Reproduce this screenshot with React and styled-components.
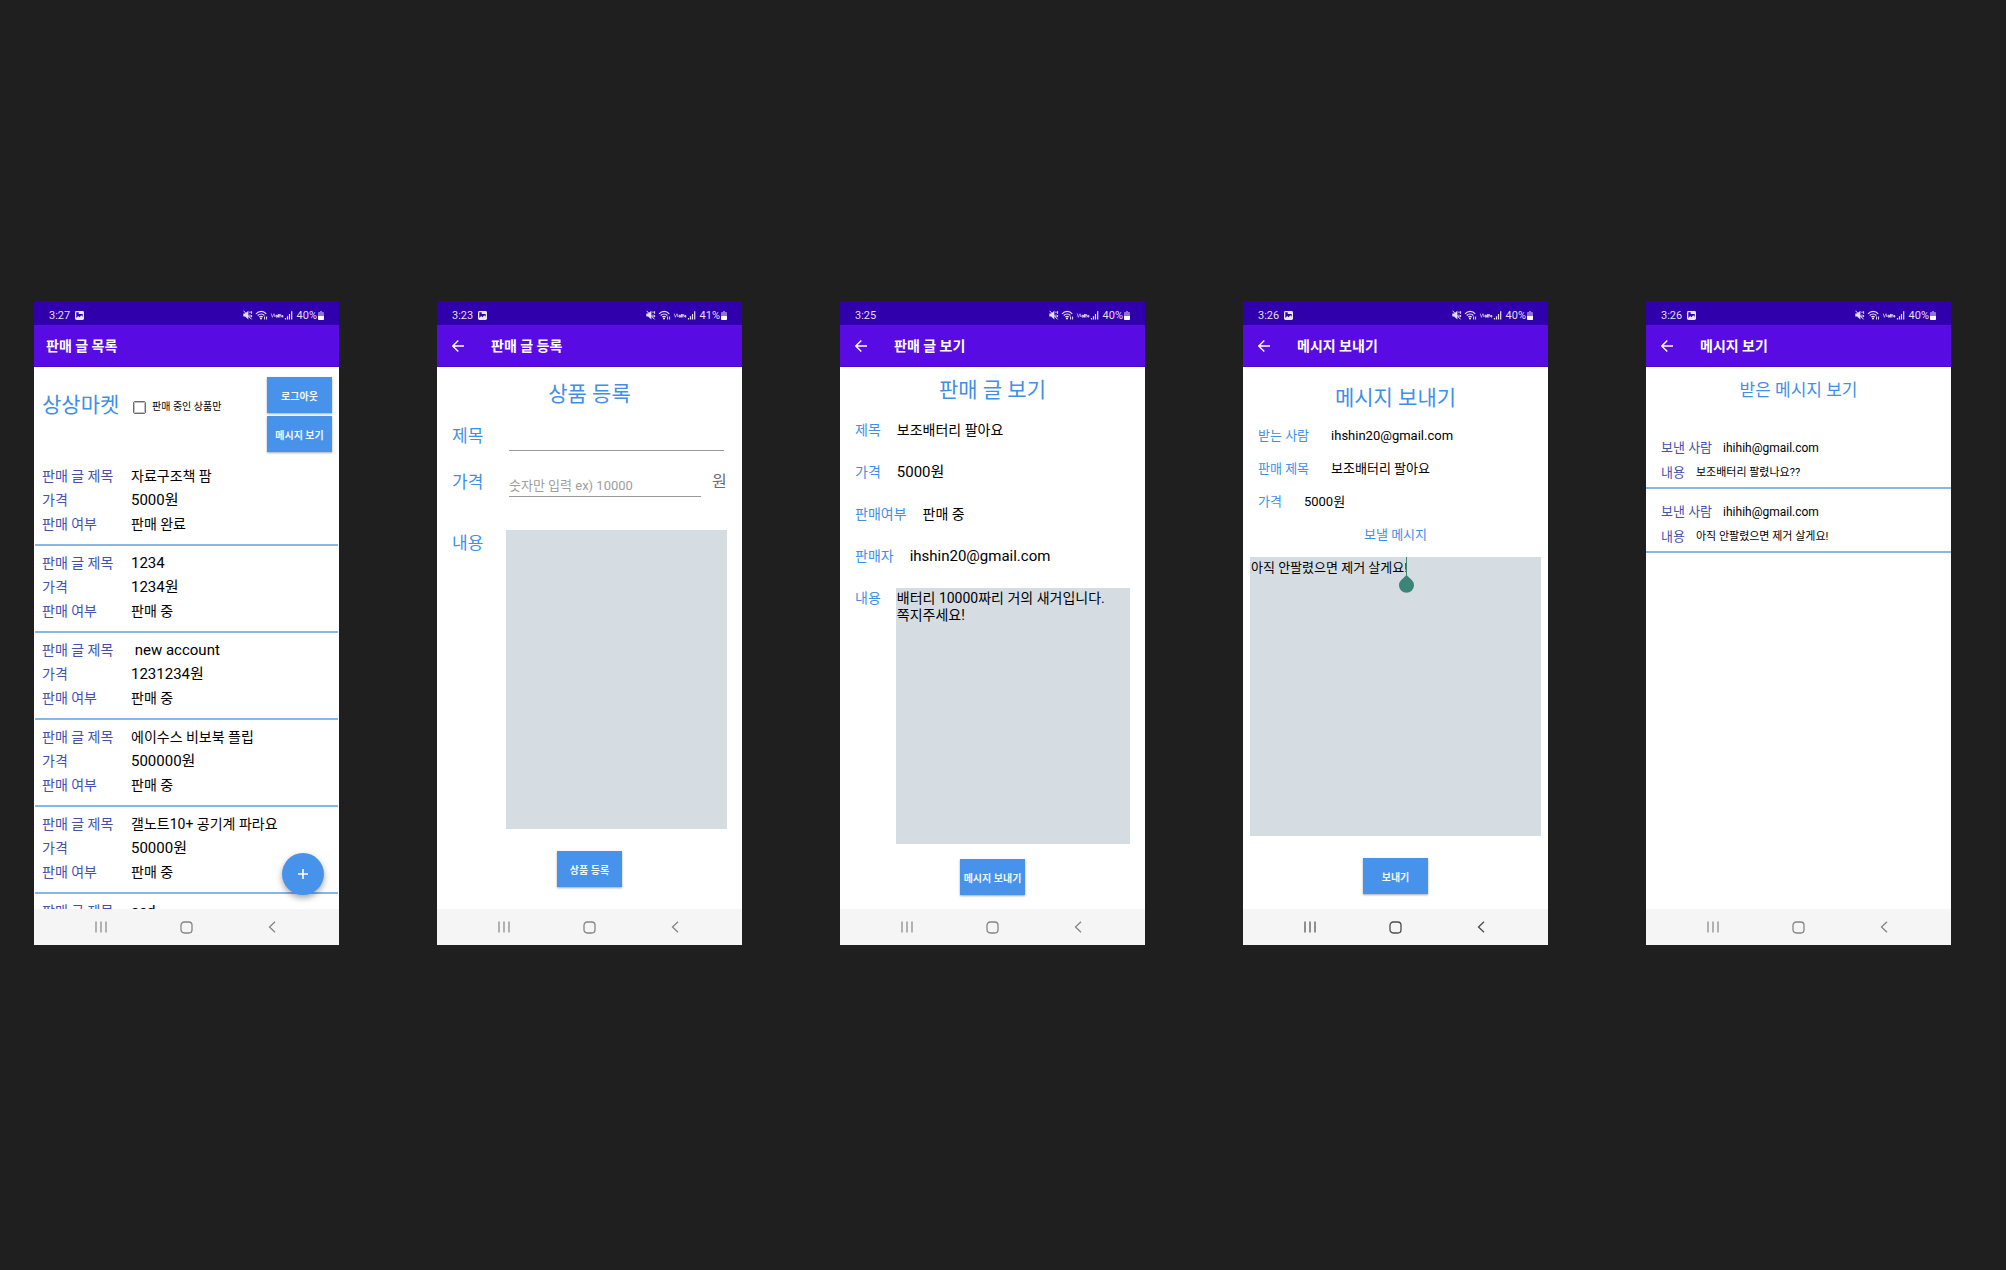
import React from "react";
import styled, { createGlobalStyle } from "styled-components";

const blue = "#4793ec";
const titleBlue = "#3f8fe9";
const indigo = "#4351b0";
const fill = "#d5dde3";

const GlobalStyle = createGlobalStyle`
  *, *::before, *::after { box-sizing: border-box; }
  body {
    margin: 0;
    background: #1f1f1f;
    font-family: Roboto, "Noto Sans CJK KR", sans-serif;
    color: #000;
  }
  h1, h2, ul, dl, dd, dt, p { margin: 0; padding: 0; font-weight: 400; }
  button, input, textarea { font-family: inherit; }
`;

const Board = styled.main`
  min-height: 100vh;
  display: grid;
  grid-template-columns: repeat(5, minmax(0, 1fr));
  gap: 98px;
  align-items: start;
  padding: 301px 55px 0 34px;
`;

const Phone = styled.section`
  display: flex;
  flex-direction: column;
  height: 644px;
  background: #fff;
`;

const StatusBar = styled.div`
  flex: none;
  height: 24px;
  padding: 5px 15px 0;
  display: flex;
  align-items: center;
  justify-content: space-between;
  background: #3000ad;
  color: #e6defa;
  font-size: 11px;
  line-height: 18px;
`;

const StatusGroup = styled.div`
  display: flex;
  align-items: center;
  gap: ${(p) => p.$gap}px;
`;

const AppBar = styled.header`
  flex: none;
  height: 42px;
  padding: 0 ${(p) => (p.$back ? 15 : 12)}px;
  display: flex;
  align-items: center;
  gap: 27px;
  background: #590be3;
  border-bottom: 1px solid #4a08c8;
  color: #fff;
`;

const BarTitle = styled.h1`
  font-size: 14px;
  line-height: 20px;
  font-weight: 700;
`;

const IconButton = styled.button`
  display: flex;
  padding: 0;
  border: 0;
  background: none;
  color: inherit;
`;

const Content = styled.div`
  position: relative;
  flex: 1;
  min-height: 0;
  display: flex;
  flex-direction: column;
  padding-top: ${(p) => p.$top}px;
  overflow: hidden;
`;

const NavBar = styled.nav`
  flex: none;
  height: 36px;
  padding: 0 24px;
  display: grid;
  grid-template-columns: repeat(3, 1fr);
  align-items: center;
  justify-items: center;
  background: #f5f5f5;
  color: ${(p) => (p.$dark ? "#4c4c4c" : "#858585")};
`;

const Heading = styled.h2`
  font-size: ${(p) => p.$size}px;
  line-height: 30px;
  text-align: center;
  color: ${titleBlue};
`;

const Action = styled.button`
  flex: none;
  width: 65px;
  height: 36px;
  padding: 0;
  border: 0;
  background: ${blue};
  color: #f2f8ff;
  font-size: 10px;
  font-weight: 700;
  white-space: nowrap;
  box-shadow: 0 1px 2px rgba(0, 0, 0, 0.35);
`;

const Footer = styled.div`
  display: flex;
  justify-content: center;
  margin-top: ${(p) => p.$top}px;
`;

/* listing screen */
const MarketHead = styled.div`
  flex: none;
  height: 92px;
  padding: 10px 7px 0 8px;
  display: flex;
`;

const Brand = styled.h2`
  width: 91px;
  margin-top: 13px;
  font-size: 21px;
  line-height: 30px;
  white-space: nowrap;
  color: ${titleBlue};
`;

const Filter = styled.label`
  flex: 1;
  height: 14px;
  margin-top: 23px;
  display: flex;
  align-items: center;
  gap: 6px;
  font-size: 10px;
  line-height: 14px;
`;

const Check = styled.input`
  appearance: none;
  width: 13px;
  height: 13px;
  margin: 0;
  border: 1px solid #6c6c6c;
  outline: 1px solid #c0c0c0;
  outline-offset: -2px;
  border-radius: 2px;
`;

const Stack = styled.div`
  display: flex;
  flex-direction: column;
  gap: 3px;
`;

const Items = styled.ul`
  list-style: none;
  padding: 0 1px;
`;

const Item = styled.li`
  height: 87px;
  padding: 5px 7px 0;
  border-bottom: 2px solid #86b7e8;
`;

const Pair = styled.dl`
  display: grid;
  grid-template-columns: 89px 1fr;
  font-size: 14px;
  line-height: 24px;
  white-space: pre;
`;

const Term = styled.dt`
  color: ${(p) => p.$color};
`;

const Value = styled.dd`
  font-size: ${(p) => p.$size}px;
`;

const Fab = styled.button`
  position: absolute;
  right: 15px;
  bottom: 14px;
  width: 42px;
  height: 42px;
  padding: 0;
  border: 0;
  border-radius: 50%;
  display: flex;
  align-items: center;
  justify-content: center;
  background: ${blue};
  box-shadow: 0 3px 6px rgba(0, 0, 0, 0.35);
`;

/* registration form */
const Form = styled.form`
  display: grid;
  grid-template-columns: 57px 1fr;
  padding: 14px 15px 0;
`;

const FieldLabel = styled.label`
  font-size: 17px;
  line-height: 26px;
  color: ${titleBlue};
`;

const FieldLine = styled.div`
  display: flex;
  align-items: flex-start;
  height: ${(p) => p.$height}px;
`;

const TextInput = styled.input`
  flex: 1;
  min-width: 0;
  height: 28px;
  margin-right: ${(p) => p.$right}px;
  padding: 6px 0 0;
  border: 0;
  border-bottom: 1px solid #9a9a9a;
  border-radius: 0;
  background: none;
  font-size: 13px;
  &::placeholder { color: #9e9e9e; }
`;

const Unit = styled.span`
  width: 15px;
  font-size: 16px;
  line-height: 26px;
  color: #6c6c6c;
`;

const Area = styled.textarea`
  display: block;
  width: 100%;
  height: ${(p) => p.$height}px;
  margin: 0;
  padding: 2px 1px;
  border: 0;
  border-radius: 0;
  resize: none;
  background: ${fill};
  color: #000;
  font-size: ${(p) => p.$size}px;
  line-height: 17px;
`;

const AreaSlot = styled.div`
  margin-left: -3px;
`;

/* detail and message screens */
const Lines = styled.div`
  padding-top: ${(p) => p.$top}px;
`;

const Line = styled.dl`
  display: flex;
  height: ${(p) => p.$height}px;
  padding: 0 15px;
  gap: ${(p) => p.$gap}px;
  font-size: ${(p) => p.$size}px;
  line-height: 20px;
  white-space: nowrap;
`;

const BodyRow = styled.div`
  display: flex;
  gap: 15px;
  padding: 0 15px;
  font-size: 14px;
  line-height: 20px;
`;

const BodyLabel = styled.label`
  flex: none;
  color: ${titleBlue};
`;

const MessageLabel = styled.label`
  text-align: center;
  font-size: 13px;
  line-height: 20px;
  color: ${titleBlue};
`;

const MessageBox = styled.div`
  position: relative;
  margin: 12px 7px 0;
`;

const Caret = styled.svg`
  position: absolute;
  left: 149px;
  top: 0;
`;

const Message = styled.li`
  height: 64px;
  border-bottom: 2px solid #86b7e8;
`;

const Messages = styled.ul`
  list-style: none;
  margin-top: 20px;
`;

const PictureIcon = () => (
  <svg width="9" height="9" viewBox="0 0 9 9" aria-hidden="true">
    <rect width="9" height="9" rx="1.4" fill="#ece6fb" />
    <path d="M1.3 1.300h2.400v1.700h4V5.800L6.200 4.300 4.500 6.300 3.200 5.100 1.300 6.900Z" fill="#3000ad" />
  </svg>
);

const SystemIcons = () => (
  <svg width="50" height="11" viewBox="0 0 50 11" fill="none" stroke="#e6defa" aria-hidden="true">
    <path d="M.3 3.500h1.800L5.400.8v8.600L2.100 6.600H.3Z" fill="#e6defa" stroke="none" />
    <path d="M.6.8 8.600 9.400M7 1.500v1.600M8.600 1.200v2.600M7 4.600v2.600M8.600 5v2.200" strokeWidth="1" />
    <path d="M13 3.800C16 .5 20.500.5 23.200 3.800M14.700 5.500C16.600 3.500 19.600 3.500 21.400 5.500M16.300 7.100C17.400 6 18.700 6 19.800 7.100" strokeWidth="1.200" />
    <circle cx="18" cy="8.500" r="1.100" fill="#e6defa" stroke="none" />
    <path d="M21.600 6.500v3M23.600 9.500V6.500" strokeWidth="1" />
    <path d="M28.200 3.500 29.400 7.300 31 3.500M31.600 4v3" strokeWidth=".8" opacity=".8" />
    <path d="M33 5.300h1.700V7H33ZM35.600 4v3.500M36.900 4v3.500M36.200 5.100h2M38.800 5.500h1V7h-1Z" strokeWidth="1" />
    <path d="M42.500 8v1.500M44.500 6.300v3.200M46.500 4v5.500M48.700 1.300v8.200" strokeWidth="1.200" />
  </svg>
);

const BatteryIcon = () => (
  <svg width="6" height="9" viewBox="0 0 6 9" aria-hidden="true">
    <path d="M2 0h2v1h1.200q.8 0 .8.800V5H0V1.800Q0 1 .8 1H2Z" fill="#8f73d6" />
    <path d="M0 5h6v3.200q0 .8-.8.800H.8Q0 9 0 8.200Z" fill="#fff" />
  </svg>
);

const BackArrow = () => (
  <svg width="12" height="12" viewBox="0 0 12 12" fill="none" stroke="#fff" strokeWidth="1.400" aria-hidden="true">
    <path d="M12 6H1M6.300.5.8 6l5.500 5.500" />
  </svg>
);

function Screen({ time, picture = true, battery = "40%", title, back = true, dark, top = 0, children }) {
  return (
    <Phone>
      <StatusBar>
        <StatusGroup $gap={5}>
          <span>{time}</span>
          {picture && <PictureIcon />}
        </StatusGroup>
        <StatusGroup $gap={1}>
          <StatusGroup $gap={4}>
            <SystemIcons />
            <span>{battery}</span>
          </StatusGroup>
          <BatteryIcon />
        </StatusGroup>
      </StatusBar>
      <AppBar $back={back}>
        {back && (
          <IconButton type="button" aria-label="뒤로">
            <BackArrow />
          </IconButton>
        )}
        <BarTitle>{title}</BarTitle>
      </AppBar>
      <Content $top={top}>{children}</Content>
      <NavBar $dark={dark}>
        <IconButton type="button" aria-label="최근 앱">
          <svg width="12" height="12" viewBox="0 0 12 12" fill="none" stroke="currentColor" strokeWidth="1.200">
            <path d="M1 .5v11M6 .5v11M11 .5v11" />
          </svg>
        </IconButton>
        <IconButton type="button" aria-label="홈">
          <svg width="13" height="13" viewBox="0 0 13 13" fill="none" stroke="currentColor" strokeWidth="1.300">
            <rect x="1" y="1" width="11" height="11" rx="3.200" />
          </svg>
        </IconButton>
        <IconButton type="button" aria-label="뒤로 가기">
          <svg width="8" height="12" viewBox="0 0 8 12" fill="none" stroke="currentColor" strokeWidth="1.300">
            <path d="M7 .7 1.500 6 7 11.300" />
          </svg>
        </IconButton>
      </NavBar>
    </Phone>
  );
}

const listings = [
  { name: "자료구조책 팜", size: 14, price: "5000원", state: "판매 완료" },
  { name: "1234", size: 15, price: "1234원", state: "판매 중" },
  { name: " new account", size: 15, price: "1231234원", state: "판매 중" },
  { name: "에이수스 비보북 플립", size: 14, price: "500000원", state: "판매 중" },
  { name: "갤노트10+ 공기계 파라요", size: 14, price: "50000원", state: "판매 중" },
  { name: "asd", size: 15 },
];

const details = [
  ["제목", "보조배터리 팔아요", 14],
  ["가격", "5000원", 15],
  ["판매여부", "판매 중", 14],
  ["판매자", "ihshin20@gmail.com", 15],
];

const recipient = [
  ["받는 사람", "ihshin20@gmail.com"],
  ["판매 제목", "보조배터리 팔아요"],
  ["가격", "5000원"],
];

const inbox = [
  ["ihihih@gmail.com", "보조배터리 팔렸나요??"],
  ["ihihih@gmail.com", "아직 안팔렸으면 제거 살게요!"],
];

export default function App() {
  return (
    <>
      <GlobalStyle />
      <Board>
        <Screen time="3:27" title="판매 글 목록" back={false}>
          <MarketHead>
            <Brand>상상마켓</Brand>
            <Filter>
              <Check type="checkbox" />
              판매 중인 상품만
            </Filter>
            <Stack>
              <Action type="button">로그아웃</Action>
              <Action type="button">메시지 보기</Action>
            </Stack>
          </MarketHead>
          <Items>
            {listings.map(({ name, size, price, state }) => (
              <Item key={name}>
                <Pair>
                  <Term $color={indigo}>판매 글 제목</Term>
                  <Value $size={size}>{name}</Value>
                  {price && (
                    <>
                      <Term $color={indigo}>가격</Term>
                      <Value $size={15}>{price}</Value>
                      <Term $color={indigo}>판매 여부</Term>
                      <Value $size={14}>{state}</Value>
                    </>
                  )}
                </Pair>
              </Item>
            ))}
          </Items>
          <Fab type="button" aria-label="글 등록">
            <svg width="10" height="10" viewBox="0 0 10 10" stroke="#fff" strokeWidth="1.600" aria-hidden="true">
              <path d="M5 0v10M0 5h10" />
            </svg>
          </Fab>
        </Screen>

        <Screen time="3:23" battery="41%" title="판매 글 등록" top={12}>
          <Heading $size={21}>상품 등록</Heading>
          <Form id="register" onSubmit={(e) => e.preventDefault()}>
            <FieldLabel htmlFor="name">제목</FieldLabel>
            <FieldLine $height={46}>
              <TextInput id="name" type="text" $right={3} />
            </FieldLine>
            <FieldLabel htmlFor="price">가격</FieldLabel>
            <FieldLine $height={61}>
              <TextInput id="price" type="text" placeholder="숫자만 입력 ex) 10000" $right={11} />
              <Unit>원</Unit>
            </FieldLine>
            <FieldLabel htmlFor="body">내용</FieldLabel>
            <AreaSlot>
              <Area id="body" $height={299} $size={14} />
            </AreaSlot>
          </Form>
          <Footer $top={22}>
            <Action type="submit" form="register">상품 등록</Action>
          </Footer>
        </Screen>

        <Screen time="3:25" picture={false} title="판매 글 보기" top={8}>
          <Heading $size={21}>판매 글 보기</Heading>
          <Lines $top={15}>
            {details.map(([label, value, size]) => (
              <Line key={label} $height={42} $gap={16} $size={14}>
                <Term $color={titleBlue}>{label}</Term>
                <Value $size={size}>{value}</Value>
              </Line>
            ))}
          </Lines>
          <BodyRow>
            <BodyLabel htmlFor="detail">내용</BodyLabel>
            <Area
              id="detail"
              readOnly
              $height={256}
              $size={14}
              defaultValue={"배터리 10000짜리 거의 새거입니다.\n쪽지주세요!"}
            />
          </BodyRow>
          <Footer $top={15}>
            <Action type="button">메시지 보내기</Action>
          </Footer>
        </Screen>

        <Screen time="3:26" title="메시지 보내기" dark top={16}>
          <Heading $size={21}>메시지 보내기</Heading>
          <Lines $top={13}>
            {recipient.map(([label, value]) => (
              <Line key={label} $height={33} $gap={22} $size={13}>
                <Term $color={titleBlue}>{label}</Term>
                <Value $size={13}>{value}</Value>
              </Line>
            ))}
          </Lines>
          <MessageLabel htmlFor="message">보낼 메시지</MessageLabel>
          <MessageBox>
            <Area id="message" $height={279} $size={13} defaultValue="아직 안팔렸으면 제거 살게요!" />
            <Caret width="16" height="36" viewBox="0 0 16 36" aria-hidden="true">
              <rect x="7" width="1" height="19" fill="#3a8577" />
              <path d="M7.500 18 13 23.200A7.500 7.500 0 1 1 2 23.200Z" fill="#3a8577" />
            </Caret>
          </MessageBox>
          <Footer $top={22}>
            <Action type="button">보내기</Action>
          </Footer>
        </Screen>

        <Screen time="3:26" title="메시지 보기" top={8}>
          <Heading $size={17}>받은 메시지 보기</Heading>
          <Messages>
            {inbox.map(([from, text]) => (
              <Message key={text}>
                <Lines $top={13}>
                  <Line $height={25} $gap={11} $size={13}>
                    <Term $color={indigo}>보낸 사람</Term>
                    <Value $size={12}>{from}</Value>
                  </Line>
                  <Line $height={24} $gap={11} $size={13}>
                    <Term $color={indigo}>내용</Term>
                    <Value $size={11}>{text}</Value>
                  </Line>
                </Lines>
              </Message>
            ))}
          </Messages>
        </Screen>
      </Board>
    </>
  );
}
